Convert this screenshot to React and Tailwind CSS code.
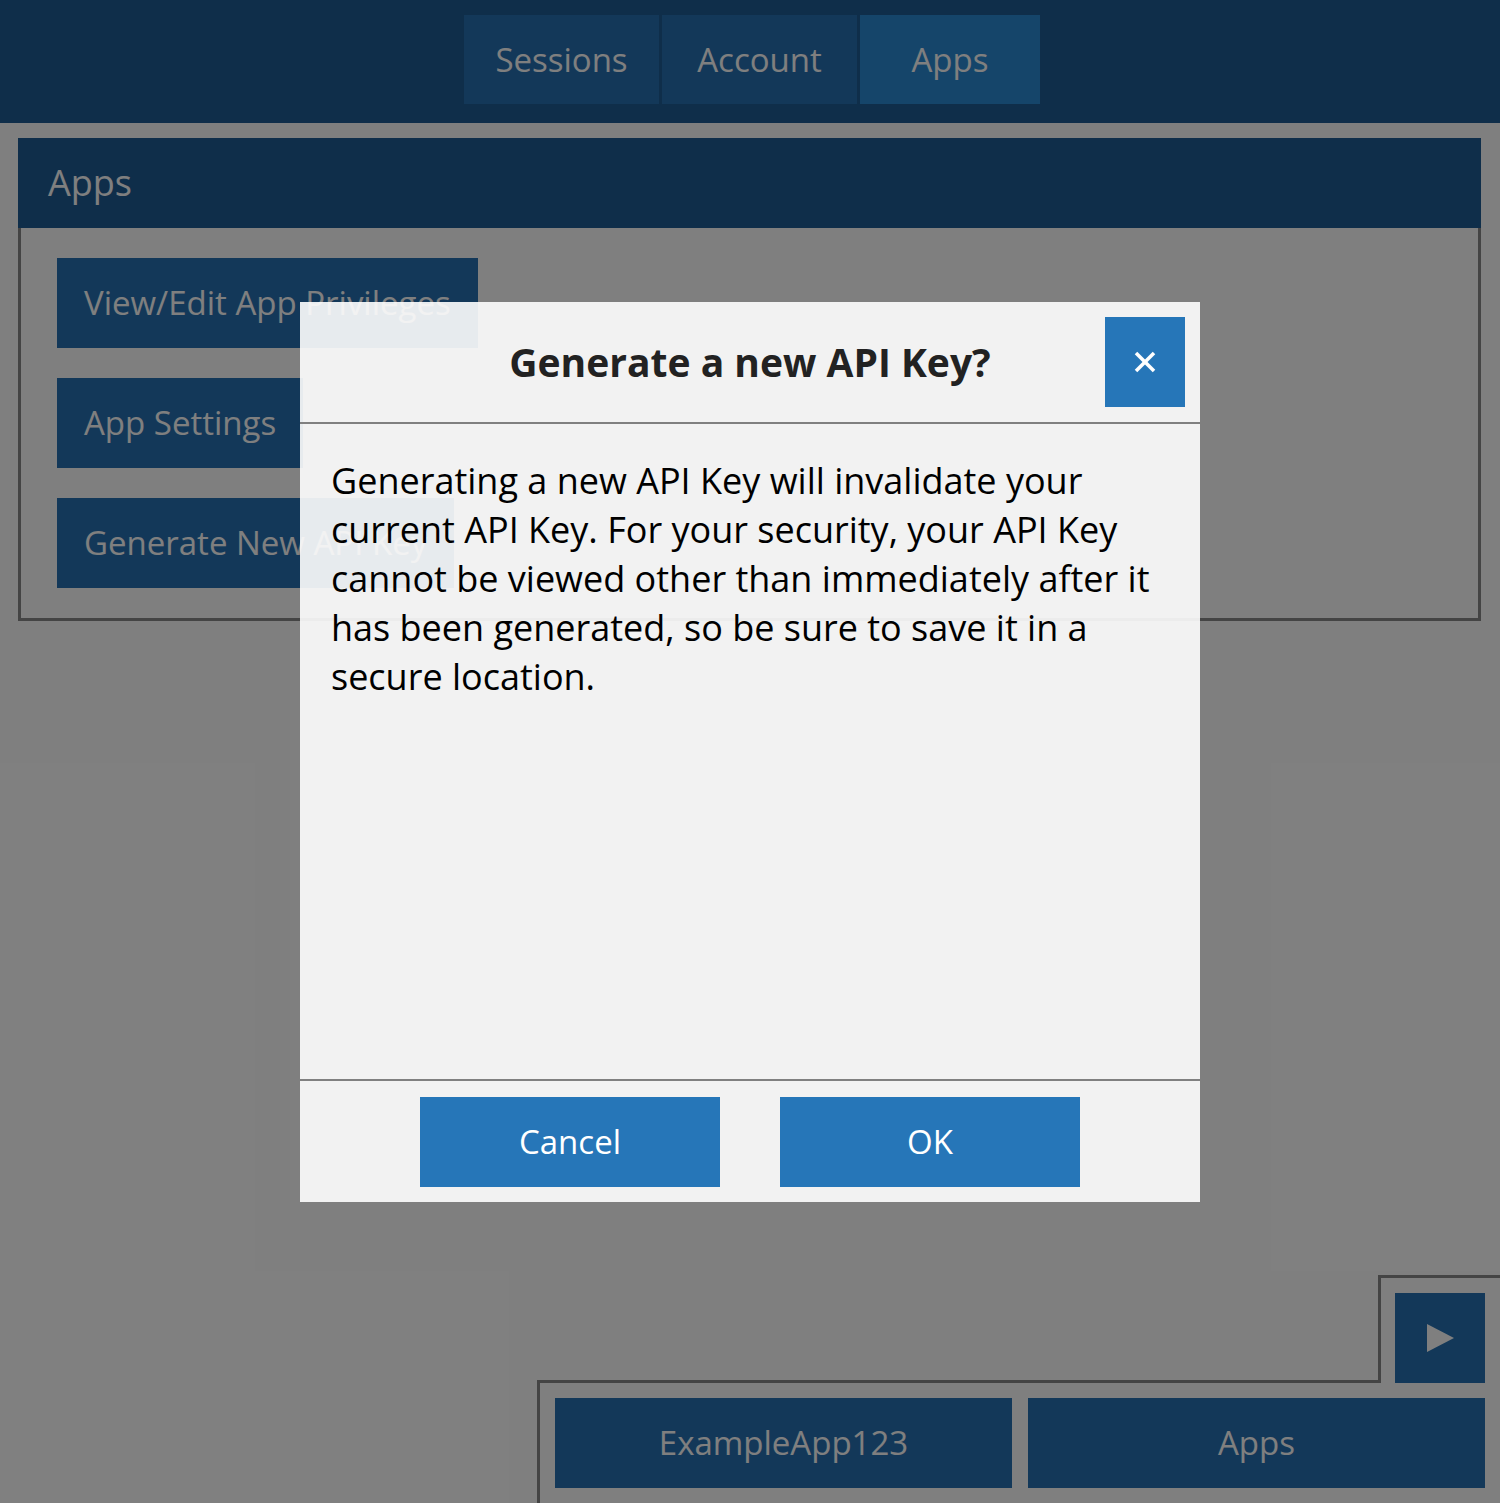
function NavButton({ label, active, width }) {
  return (
    <div
      className={`${width} h-[89px] flex items-center justify-center text-[33px] text-white ${
        active ? 'bg-[#2a8bd4]' : 'bg-[#2671b3]'
      }`}
    >
      {label}
    </div>
  );
}

function PanelButton({ children }) {
  return (
    <div className="h-[90px] px-[27px] flex items-center bg-[#2671b3] text-[33px] text-white whitespace-nowrap">
      {children}
    </div>
  );
}

export default function App() {
  return (
    <div className="relative h-[1503px] overflow-hidden bg-white font-['Open_Sans',sans-serif]">
      {/* ── Top nav ── */}
      <header className="h-[123px] bg-[#1e5c94] flex justify-center items-start pt-[15px] pl-[4px] gap-[3px]">
        <NavButton label="Sessions" width="w-[195px]" />
        <NavButton label="Account" width="w-[195px]" />
        <NavButton label="Apps" width="w-[180px]" active />
      </header>

      {/* ── Apps card ── */}
      <main className="pt-[15px] pl-[18px] pr-[19px]">
        <div className="h-[90px] bg-[#1e5c94] flex items-center pl-[30px] text-[36px] text-white">Apps</div>
        <div className="border-x-[3px] border-b-[3px] border-[#888888] pt-[30px] pb-[30px] pl-[36px] flex flex-col items-start gap-[30px]">
          <PanelButton>View/Edit App Privileges</PanelButton>
          <PanelButton>App Settings</PanelButton>
          <PanelButton>Generate New API Key</PanelButton>
        </div>
      </main>

      {/* ── Bottom-right dock ── */}
      <div className="absolute left-[1378px] top-[1275px] right-0 h-[108px] z-10 bg-white border-t-[3px] border-l-[3px] border-[#888888] pt-[15px] pl-[14px]">
        <div className="w-[90px] h-[90px] bg-[#2671b3] flex items-center justify-center">
          <svg width="28" height="28" viewBox="0 0 28 28">
            <polygon points="1,0 28,14 1,28" fill="white" />
          </svg>
        </div>
      </div>
      <div className="absolute left-[537px] top-[1380px] right-0 bottom-0 border-t-[3px] border-l-[3px] border-[#888888] pt-[15px] pl-[15px] pr-[15px] flex gap-[16px]">
        <div className="flex-1 h-[90px] bg-[#2671b3] flex items-center justify-center text-[33px] text-white">ExampleApp123</div>
        <div className="flex-1 h-[90px] bg-[#2671b3] flex items-center justify-center text-[33px] text-white">Apps</div>
      </div>

      {/* ── Modal overlay ── */}
      <div className="absolute inset-0 z-20 bg-black/50" />

      <div className="absolute z-30 left-[300px] top-[302px] w-[900px] h-[900px] bg-white/90 flex flex-col">
        <div className="relative h-[122px] flex-shrink-0 border-b-2 border-[#808080] flex items-center justify-center">
          <h2 className="text-[39px] font-bold text-[#222222]">Generate a new API Key?</h2>
          <button className="absolute right-[15px] top-[15px] w-[80px] h-[90px] bg-[#2676b8] flex items-center justify-center">
            <svg width="22" height="22" viewBox="0 0 22 22" stroke="white" strokeWidth="3.5" strokeLinecap="butt">
              <line x1="2" y1="2" x2="20" y2="20" />
              <line x1="20" y1="2" x2="2" y2="20" />
            </svg>
          </button>
        </div>

        <div className="flex-1 pt-[32px] pl-[31px] pr-[30px] text-[36px] leading-[49px] text-black">
          Generating a new API Key will invalidate your current API Key. For your security, your API Key cannot be viewed
          other than immediately after it has been generated, so be sure to save it in a secure location.
        </div>

        <div className="flex-shrink-0 border-t-2 border-[#808080] pt-[16px] pb-[15px] flex justify-center gap-[60px]">
          <button className="w-[300px] h-[90px] bg-[#2676b8] text-[33px] text-white">Cancel</button>
          <button className="w-[300px] h-[90px] bg-[#2676b8] text-[33px] text-white">OK</button>
        </div>
      </div>
    </div>
  );
}
